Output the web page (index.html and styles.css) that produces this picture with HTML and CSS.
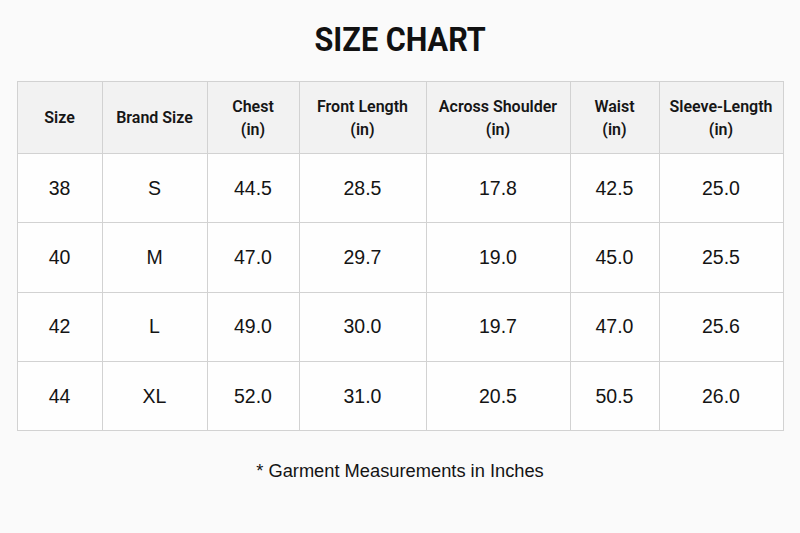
FILE: index.html
```html
<!DOCTYPE html>
<html>
<head>
<meta charset="utf-8">
<link rel="stylesheet" href="styles.css">
</head>
<body>
<div class="page">
  <h1 class="title">SIZE CHART</h1>
  <table class="chart">
    <colgroup>
      <col class="c1"><col class="c2"><col class="c3"><col class="c4"><col class="c5"><col class="c6"><col class="c7">
    </colgroup>
    <thead>
      <tr>
        <th>Size</th>
        <th>Brand Size</th>
        <th>Chest<br>(in)</th>
        <th>Front Length<br>(in)</th>
        <th>Across Shoulder<br>(in)</th>
        <th>Waist<br>(in)</th>
        <th>Sleeve-Length<br>(in)</th>
      </tr>
    </thead>
    <tbody>
      <tr><td>38</td><td>S</td><td>44.5</td><td>28.5</td><td>17.8</td><td>42.5</td><td>25.0</td></tr>
      <tr><td>40</td><td>M</td><td>47.0</td><td>29.7</td><td>19.0</td><td>45.0</td><td>25.5</td></tr>
      <tr><td>42</td><td>L</td><td>49.0</td><td>30.0</td><td>19.7</td><td>47.0</td><td>25.6</td></tr>
      <tr><td>44</td><td>XL</td><td>52.0</td><td>31.0</td><td>20.5</td><td>50.5</td><td>26.0</td></tr>
    </tbody>
  </table>
  <p class="note">* Garment Measurements in Inches</p>
</div>
</body>
</html>
```
FILE: styles.css
```css
html, body {
  margin: 0;
  padding: 0;
  background: #fafafa;
}
.page {
  width: 800px;
  height: 533px;
  padding-top: 20px;
  box-sizing: border-box;
  display: flex;
  flex-direction: column;
  align-items: center;
}
.title {
  margin: 0;
  font-family: Roboto, "Liberation Sans", sans-serif;
  font-weight: 700;
  font-size: 34px;
  line-height: 38px;
  color: #111;
  letter-spacing: 0;
  transform: scaleX(0.9);
}
.chart {
  margin-top: 23px;
  border-collapse: collapse;
  width: 766px;
  table-layout: fixed;
  font-family: "Liberation Sans", Arial, sans-serif;
  color: #141414;
}
.c1 { width: 85px; }
.c2 { width: 105px; }
.c3 { width: 92px; }
.c4 { width: 127px; }
.c5 { width: 144px; }
.c6 { width: 89px; }
.c7 { width: 124px; }
.chart th, .chart td {
  border: 1.5px solid #d2d2d2;
  text-align: center;
  padding: 0;
}
.chart th {
  background: #f2f2f2;
  height: 71px;
  font-family: Roboto, "Liberation Sans", sans-serif;
  font-weight: 600;
  font-size: 16px;
  line-height: 23px;
  color: #161616;
}
.chart td {
  height: 68.3px;
  font-size: 19.5px;
  background: #fefefe;
}
.note {
  margin: 29px 0 0 0;
  font-family: "Liberation Sans", Arial, sans-serif;
  font-size: 18.3px;
  color: #141414;
}
```
